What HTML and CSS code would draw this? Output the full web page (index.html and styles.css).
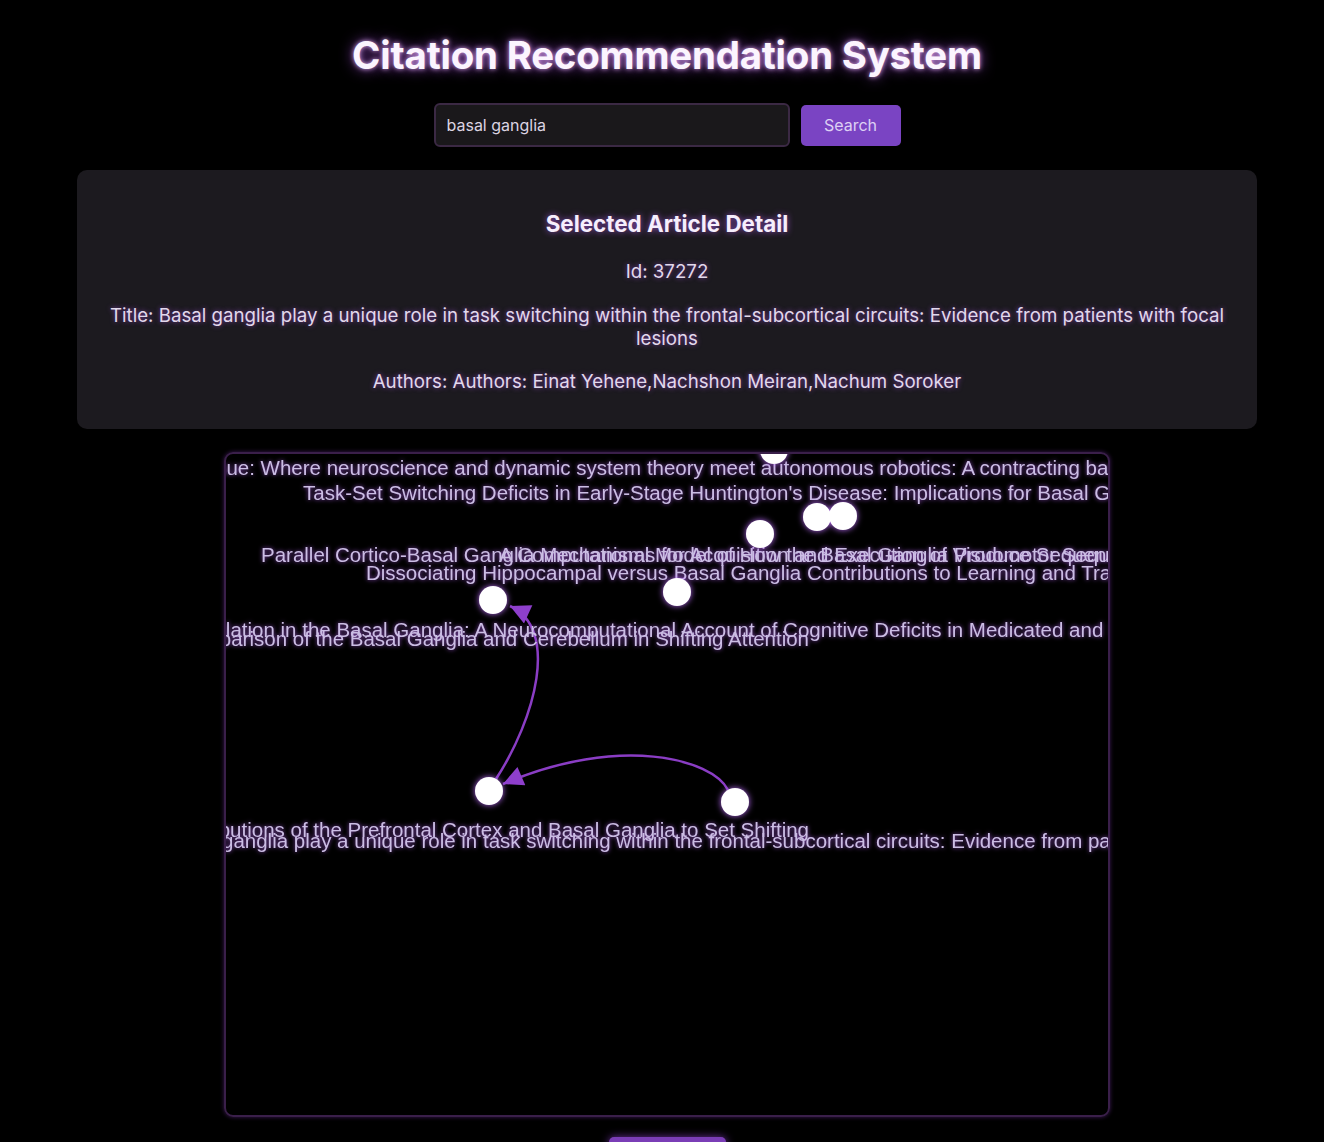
FILE: index.html
```html
<!DOCTYPE html>
<html lang="en">
<head>
<meta charset="utf-8">
<title>Citation Recommendation System</title>
<link rel="stylesheet" href="styles.css">
</head>
<body>
<div class="app">
  <h1 class="app-title">Citation Recommendation System</h1>
  <form class="search-row" onsubmit="return false">
    <input class="search-input" type="text" value="basal ganglia">
    <button class="search-btn" type="button">Search</button>
  </form>
  <section class="detail-card">
    <h2 class="detail-heading">Selected Article Detail</h2>
    <p class="detail-line detail-id">Id: 37272</p>
    <p class="detail-line detail-title">Title: Basal ganglia play a unique role in task switching within the frontal-subcortical circuits: Evidence from patients with focal lesions</p>
    <p class="detail-line detail-authors">Authors: Authors: Einat Yehene,Nachshon Meiran,Nachum Soroker</p>
  </section>
  <div class="graph-box">
    <svg class="graph" width="882" height="661" viewBox="226 455 882 661">
      <defs>
        <marker id="arrow" viewBox="0 0 10 10" refX="10" refY="5" markerWidth="26" markerHeight="20" markerUnits="userSpaceOnUse" orient="auto">
          <path d="M0,0 L10,5 L0,10 z" class="arrow-head"/>
        </marker>
      </defs>
      <g class="edges">
        <path class="edge" d="M496,780 C535,720 560,630 510,607" marker-end="url(#arrow)"/>
        <path class="edge" d="M728,791 C712,760 620,735 503,785" marker-end="url(#arrow)"/>
      </g>
      <g class="labels">
        <text x="76" y="476">2008 Special Issue: Where neuroscience and dynamic system theory meet autonomous robotics: A contracting basal ganglia model for action selection</text>
        <text x="303" y="501">Task-Set Switching Deficits in Early-Stage Huntington's Disease: Implications for Basal Ganglia Function</text>
        <text x="261" y="563">Parallel Cortico-Basal Ganglia Mechanisms for Acquisition and Execution of Visuomotor Sequences</text>
        <text x="499" y="563">A Computational Model of How the Basal Ganglia Produce Sequences</text>
        <text x="366" y="581">Dissociating Hippocampal versus Basal Ganglia Contributions to Learning and Transfer</text>
        <text x="-10" y="638">Dynamic Dopamine Modulation in the Basal Ganglia: A Neurocomputational Account of Cognitive Deficits in Medicated and Nonmedicated Parkinsonism</text>
        <text x="809" y="647" text-anchor="end">A Comparison of the Basal Ganglia and Cerebellum in Shifting Attention</text>
        <text x="809" y="838" text-anchor="end">Contributions of the Prefrontal Cortex and Basal Ganglia to Set Shifting</text>
        <text x="165" y="849">Basal ganglia play a unique role in task switching within the frontal-subcortical circuits: Evidence from patients with focal lesions</text>
      </g>
      <g class="nodes">
        <circle cx="774" cy="451" r="14"/>
        <circle cx="760" cy="535" r="14"/>
        <circle cx="817" cy="518" r="14"/>
        <circle cx="843" cy="517" r="14"/>
        <circle cx="677" cy="593" r="14"/>
        <circle cx="493" cy="601" r="14"/>
        <circle cx="489" cy="792" r="14"/>
        <circle cx="735" cy="803" r="14"/>
      </g>
    </svg>
  </div>
  <div class="more-row">
    <button class="more-btn" type="button">Load More</button>
  </div>
</div>
</body>
</html>
```

FILE: styles.css
```css
* { box-sizing: border-box; }

html, body {
  margin: 0;
  padding: 0;
  background: #000;
}

body {
  font-family: Inter, "Noto Sans", sans-serif;
  color: #e6dcf0;
}

.app {
  display: flex;
  flex-direction: column;
  align-items: center;
  padding: 27px 0 0 10px;
}

.app-title {
  margin: 0;
  font-size: 38.4px;
  font-weight: 700;
  line-height: 56px;
  color: #fbf4fe;
  letter-spacing: -0.2px;
  text-shadow: 0 0 5px rgba(235, 180, 255, 0.9), 0 0 14px rgba(170, 80, 230, 0.8);
}

.search-row {
  display: flex;
  align-items: center;
  gap: 11px;
  margin: 20px 0 0 0;
}

.search-input {
  width: 356px;
  height: 44px;
  background: #1a181b;
  border: 2px solid #3b2944;
  border-radius: 6px;
  padding: 0 11px;
  font-family: Inter, sans-serif;
  font-size: 16px;
  color: #dcd4e2;
  outline: none;
}

.search-btn {
  width: 100px;
  height: 41px;
  border: none;
  border-radius: 5px;
  background: #7a44c3;
  color: #ddd0f4;
  font-family: Inter, sans-serif;
  font-size: 16px;
}

.detail-card {
  width: 1180px;
  margin-top: 23px;
  background: #1c1a1f;
  border-radius: 10px;
  padding: 39px 30px 36px;
  text-align: center;
}

.detail-heading {
  margin: 0;
  font-size: 22.4px;
  font-weight: 700;
  line-height: 30px;
  color: #f6eefc;
  text-shadow: 0 0 6px rgba(170, 90, 230, 0.8);
}

.detail-line {
  margin: 0;
  font-size: 18.7px;
  line-height: 23px;
  color: #e2d8ec;
  text-shadow: 0 0 5px rgba(160, 80, 220, 0.7);
}

.detail-id { margin-top: 21px; }
.detail-title { margin-top: 21px; }
.detail-authors { margin-top: 20px; }

.graph-box {
  width: 886px;
  height: 665px;
  margin-top: 23px;
  border: 2px solid #3a1f4a;
  border-radius: 9px;
  overflow: hidden;
  box-shadow: 0 0 4px rgba(120, 50, 170, 0.5);
}

.graph {
  display: block;
}

.edge {
  fill: none;
  stroke: #8a3dc4;
  stroke-width: 2.5;
}

.arrow-head {
  fill: #8e3fcc;
}

.labels text {
  font-family: "Liberation Sans", Arial, sans-serif;
  font-size: 20.5px;
  fill: #cbbde4;
}

.labels {
  filter: drop-shadow(0 0 2px rgba(170, 90, 230, 0.8));
}

.nodes circle {
  fill: #ffffff;
}

.nodes {
  filter: drop-shadow(0 0 3px rgba(190, 110, 255, 0.95));
}

.more-row {
  display: flex;
  justify-content: center;
  margin-top: 20px;
}

.more-btn {
  width: 117px;
  height: 40px;
  border: none;
  border-radius: 5px;
  background: #7a3db6;
  color: #e8dcf8;
  font-family: Inter, sans-serif;
  font-size: 16px;
  box-shadow: 0 0 8px rgba(150, 70, 220, 0.7);
}
```
